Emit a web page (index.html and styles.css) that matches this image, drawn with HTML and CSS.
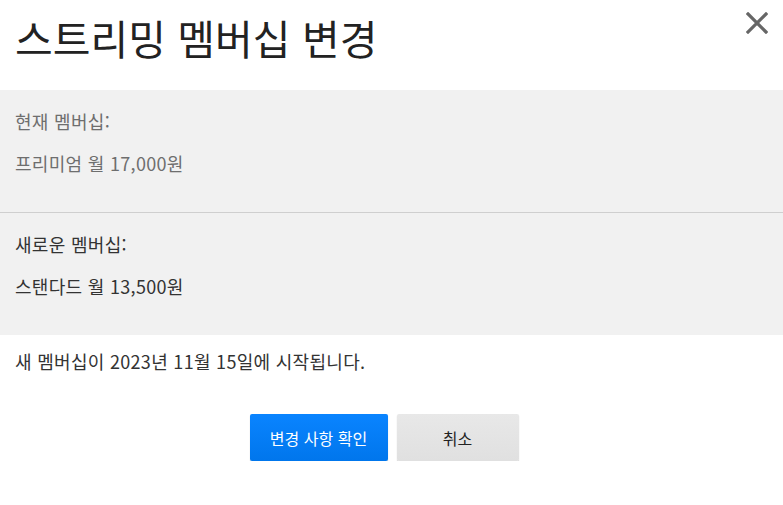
FILE: index.html
```html
<!DOCTYPE html>
<html lang="ko">
<head>
    <meta charset="UTF-8">
    <meta name="viewport" content="width=device-width, initial-scale=1.0">
    <title>스트리밍 멤버십 변경</title>
    <link rel="stylesheet" href="styles.css">
</head>
<body>

<div class="modal">
    <div class="modal-header">
        <h1>스트리밍 멤버십 변경</h1>
        <button class="close-btn" aria-label="닫기">
            <svg width="22" height="22" viewBox="0 0 22 22">
                <path d="M2 2 L20 20 M20 2 L2 20" stroke="#666" stroke-width="3.2" stroke-linecap="square"/>
            </svg>
        </button>
    </div>

    <div class="plans">
        <div class="plan plan-current">
            <p>현재 멤버십:</p>
            <p>프리미엄 월 17,000원</p>
        </div>
        <div class="plan plan-new">
            <p>새로운 멤버십:</p>
            <p>스탠다드 월 13,500원</p>
        </div>
    </div>

    <p class="start-note">새 멤버십이 2023년 11월 15일에 시작됩니다.</p>

    <div class="actions">
        <button class="btn btn-primary">변경 사항 확인</button>
        <button class="btn btn-secondary">취소</button>
    </div>
</div>

</body>
</html>
```

FILE: styles.css
```css
body {
    margin: 0;
    background-color: #fff;
    font-family: "Noto Sans CJK KR", "Noto Sans", sans-serif;
    color: #333;
}
.modal-header {
    display: flex;
    justify-content: space-between;
    align-items: flex-start;
    height: 90px;
    padding: 0 15px;
}
.modal-header h1 {
    margin: 11px 0 0;
    font-size: 41px;
    font-weight: 400;
    line-height: 52px;
    color: #222;
}
.close-btn {
    margin: 12px 0 0;
    padding: 0;
    border: none;
    background: none;
    cursor: pointer;
    line-height: 0;
}
.plans {
    background-color: #f1f1f1;
}
.plan {
    padding: 18px 15px 20px;
}
.plan p {
    margin: 0 0 15px;
    font-size: 18px;
    line-height: 27px;
    letter-spacing: 0.3px;
}
.plan-current {
    border-bottom: 1px solid #cfcfcf;
    color: #6e6e6e;
}
.plan-new {
    color: #333;
}
.start-note {
    margin: 13px 15px 0;
    font-size: 18px;
    line-height: 27px;
    letter-spacing: 0.3px;
    color: #333;
}
.actions {
    display: flex;
    justify-content: center;
    gap: 9px;
    margin-top: 39px;
    padding-right: 15px;
}
.btn {
    height: 47px;
    border: none;
    border-radius: 2px;
    font-family: inherit;
    font-size: 16px;
    cursor: pointer;
    box-shadow: 0 1px 1px rgba(0, 0, 0, 0.25);
}
.btn-primary {
    width: 138px;
    background: linear-gradient(#0a84ff, #0076ec);
    color: #fff;
}
.btn-secondary {
    width: 122px;
    background: linear-gradient(#e8e8e8, #e0e0e0);
    color: #222;
}
```
